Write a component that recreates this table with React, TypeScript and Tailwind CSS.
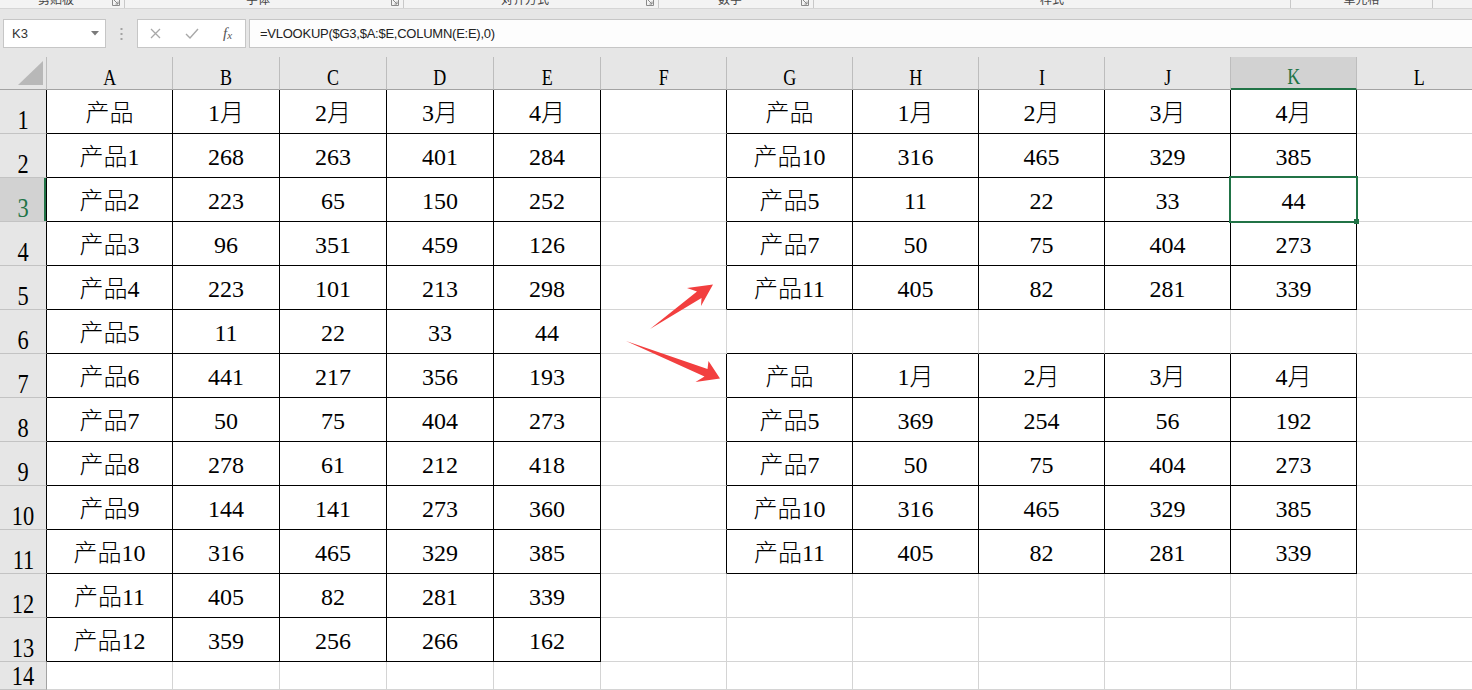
import React from "react";

const COL_LETTERS = ["A", "B", "C", "D", "E", "F", "G", "H", "I", "J", "K", "L"];
const COL_W = [
  "w-[126px]",
  "w-[107px]",
  "w-[107px]",
  "w-[107px]",
  "w-[107px]",
  "w-[126px]",
  "w-[126px]",
  "w-[126px]",
  "w-[126px]",
  "w-[126px]",
  "w-[126px]",
  "w-[126px]",
];

const left: string[][] = [
  ["产品", "1月", "2月", "3月", "4月"],
  ["产品1", "268", "263", "401", "284"],
  ["产品2", "223", "65", "150", "252"],
  ["产品3", "96", "351", "459", "126"],
  ["产品4", "223", "101", "213", "298"],
  ["产品5", "11", "22", "33", "44"],
  ["产品6", "441", "217", "356", "193"],
  ["产品7", "50", "75", "404", "273"],
  ["产品8", "278", "61", "212", "418"],
  ["产品9", "144", "141", "273", "360"],
  ["产品10", "316", "465", "329", "385"],
  ["产品11", "405", "82", "281", "339"],
  ["产品12", "359", "256", "266", "162"],
];

const rightTop: string[][] = [
  ["产品", "1月", "2月", "3月", "4月"],
  ["产品10", "316", "465", "329", "385"],
  ["产品5", "11", "22", "33", "44"],
  ["产品7", "50", "75", "404", "273"],
  ["产品11", "405", "82", "281", "339"],
];

const rightBottom: string[][] = [
  ["产品", "1月", "2月", "3月", "4月"],
  ["产品5", "369", "254", "56", "192"],
  ["产品7", "50", "75", "404", "273"],
  ["产品10", "316", "465", "329", "385"],
  ["产品11", "405", "82", "281", "339"],
];

function val(r: number, c: number): string | null {
  if (c >= 0 && c <= 4 && r >= 1 && r <= 13) return left[r - 1][c];
  if (c >= 6 && c <= 10 && r >= 1 && r <= 5) return rightTop[r - 1][c - 6];
  if (c >= 6 && c <= 10 && r >= 7 && r <= 11) return rightBottom[r - 7][c - 6];
  return null;
}
const inT = (r: number, c: number) => val(r, c) !== null;

const ribbonGroups = [
  { w: "w-[125px]", text: "剪贴板", launcher: true },
  { w: "w-[279px]", text: "字体", launcher: true },
  { w: "w-[255px]", text: "对齐方式", launcher: true },
  { w: "w-[155px]", text: "数字", launcher: true },
  { w: "w-[477px]", text: "样式", launcher: false },
  { w: "w-[142px]", text: "单元格", launcher: false },
];

function Ribbon() {
  return (
    <div className="h-[9px] bg-[#f3f3f3] border-b border-b-[#d5d5d5] flex overflow-hidden">
      {ribbonGroups.map((g, i) => (
        <div key={i} className={`${g.w} shrink-0 h-full border-r border-r-[#c8c8c8] flex`}>
          <div className="flex-1 flex justify-center">
            <span className="-mt-[7px] text-[12px] leading-[12px] text-[#444] font-['Noto_Sans_CJK_SC',sans-serif]">
              {g.text}
            </span>
          </div>
          {g.launcher && (
            <div className="w-[8px] mr-[4px] h-full">
              <svg width="8" height="8" viewBox="0 0 8 8" className="-mt-[2px]">
                <path d="M0.5 0 V7.5 H7.5 V0" fill="none" stroke="#8a8a8a" strokeWidth="1" />
                <path d="M2 2 L6 6 M6 3.5 V6 H3.5" fill="none" stroke="#8a8a8a" strokeWidth="1" />
              </svg>
            </div>
          )}
        </div>
      ))}
      <div className="flex-1" />
    </div>
  );
}

function FormulaBar() {
  return (
    <div className="h-[48px] bg-[#e6e6e6] flex items-start pt-[10px] font-['Liberation_Sans',Arial,sans-serif]">
      <div className="ml-[3px] w-[103px] shrink-0 h-[29px] bg-white border border-[#c6c6c6] flex items-center pl-[8px] pr-[6px] text-[13px] text-[#333]">
        <span className="flex-1">K3</span>
        <svg width="8" height="5" viewBox="0 0 8 5">
          <polygon points="0,0 8,0 4,4.5" fill="#7a7a7a" />
        </svg>
      </div>
      <div className="w-[31px] shrink-0 h-[29px] flex items-center justify-center">
        <svg width="3" height="14" viewBox="0 0 3 14">
          <rect x="0.5" y="1" width="2" height="2" fill="#a3a3a3" />
          <rect x="0.5" y="6" width="2" height="2" fill="#a3a3a3" />
          <rect x="0.5" y="11" width="2" height="2" fill="#a3a3a3" />
        </svg>
      </div>
      <div className="w-[109px] shrink-0 h-[29px] bg-white border border-[#c6c6c6] flex items-center">
        <div className="w-[35px] flex justify-center">
          <svg width="11" height="11" viewBox="0 0 11 11">
            <path d="M1 1 L10 10 M10 1 L1 10" stroke="#a8a8a8" strokeWidth="1.3" fill="none" />
          </svg>
        </div>
        <div className="w-[37px] flex justify-center">
          <svg width="14" height="11" viewBox="0 0 14 11">
            <path d="M1 6 L5 10 L13 1" stroke="#a8a8a8" strokeWidth="1.4" fill="none" />
          </svg>
        </div>
        <div className="w-[35px] flex justify-center text-[#555] font-['Liberation_Serif',serif] italic">
          <span className="text-[15px] leading-none">f</span>
          <span className="text-[11px] leading-none mt-[4px]">x</span>
        </div>
      </div>
      <div className="ml-[3px] w-[1300px] shrink-0 h-[29px] bg-[#fdfdfd] border border-[#c6c6c6] pl-[10px] flex items-center text-[13px] tracking-[-0.25px] text-[#222]">
        =VLOOKUP($G3,$A:$E,COLUMN(E:E),0)
      </div>
    </div>
  );
}

function ColumnHeader() {
  return (
    <div className="h-[33px] flex bg-[#e6e6e6] font-['Liberation_Serif',serif]">
      <div className="w-[47px] shrink-0 h-full border-r border-r-[#bdbdbd] border-b border-b-[#a3a3a3] relative">
        <svg width="26" height="25" viewBox="0 0 26 25" className="absolute left-[18px] top-[4px]">
          <polygon points="25,0 25,24 0,24" fill="#b8b8b8" />
        </svg>
      </div>
      {COL_LETTERS.map((l, c) => {
        const sel = c === 10;
        return (
          <div
            key={l}
            className={`${COL_W[c]} shrink-0 h-full border-r border-r-[#bdbdbd] flex items-end justify-center ${
              sel
                ? "bg-[#d2d2d2] text-[#217346] border-b-2 border-b-[#217346]"
                : "text-black border-b border-b-[#a3a3a3]"
            }`}
          >
            <span className="inline-block text-[24px] leading-none scale-x-[0.75]">{l}</span>
          </div>
        );
      })}
    </div>
  );
}

function Row({ r }: { r: number }) {
  const h = r === 14 ? "h-[28px]" : "h-[44px]";
  const selRow = r === 3;
  return (
    <div className={`${h} flex`}>
      <div
        className={`w-[47px] shrink-0 h-full border-b border-b-[#c3c3c3] border-r flex items-end justify-center font-['Liberation_Serif',serif] ${
          inT(r, 0) ? "border-r-black" : "border-r-[#a3a3a3]"
        } ${selRow ? "bg-[#d2d2d2] text-[#217346] shadow-[inset_-2px_0_0_#217346]" : "bg-[#e6e6e6] text-black"}`}
      >
        <span className="inline-block text-[28px] leading-none scale-x-[0.8] translate-y-[1px]">{r}</span>
      </div>
      {COL_LETTERS.map((l, c) => {
        const v = val(r, c);
        const rightBlack = inT(r, c) || inT(r, c + 1);
        const bottomBlack = inT(r, c) || inT(r + 1, c);
        return (
          <div
            key={l}
            className={`${COL_W[c]} shrink-0 h-full border-r border-b flex items-center justify-center pt-[3px] text-[24px] leading-none font-light text-black font-['Liberation_Serif','Noto_Sans_CJK_SC',serif] ${
              rightBlack ? "border-r-black" : "border-r-[#d4d4d4]"
            } ${bottomBlack ? "border-b-black" : "border-b-[#d4d4d4]"}`}
          >
            {v}
          </div>
        );
      })}
    </div>
  );
}

export default function App() {
  const rows = Array.from({ length: 14 }, (_, i) => i + 1);
  return (
    <div className="relative w-[1472px] h-[690px] overflow-hidden bg-white">
      <Ribbon />
      <FormulaBar />
      <ColumnHeader />
      {rows.map((r) => (
        <Row key={r} r={r} />
      ))}

      {/* selection box on K3 */}
      <div className="absolute left-[1229px] top-[176px] w-[129px] h-[47px] border-2 border-[#217346] pointer-events-none" />
      <div className="absolute left-[1354px] top-[219px] w-[5px] h-[5px] bg-[#217346] pointer-events-none" />

      {/* arrows */}
      <svg
        className="absolute left-0 top-0 pointer-events-none"
        width="1472"
        height="690"
        viewBox="0 0 1472 690"
      >
        <polygon
          points="650,329 697,291.5 687,288 713,284.5 701,306 701.5,298"
          fill="#f23f3f"
        />
        <polygon
          points="626,341 707.5,369 708.5,361 720,378.5 695.5,382 704.5,376.5"
          fill="#f23f3f"
        />
      </svg>
    </div>
  );
}
